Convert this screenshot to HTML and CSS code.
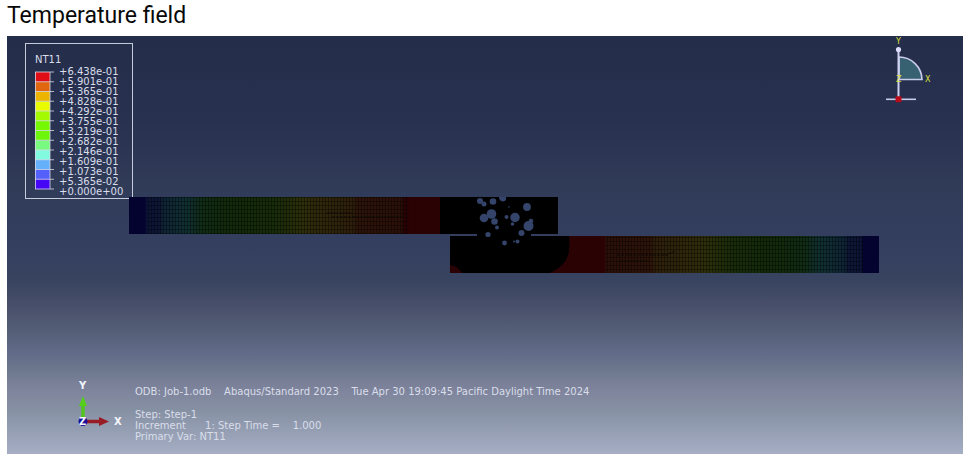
FILE: index.html
```html
<!DOCTYPE html>
<html lang="en">
<head>
<meta charset="utf-8">
<title>Temperature field</title>
<link rel="stylesheet" href="styles.css">
</head>
<body>
<main class="figure">
  <h1 class="title">Temperature field</h1>
  <section class="viewport">
    <div class="top">
      <div class="legend">
        <h2 class="legend-name">NT11</h2>
        <div class="legend-scale">
          <svg class="legend-bar" width="20" height="119" viewBox="0 0 20 119" aria-hidden="true">
            <g transform="translate(0 1)">
              <rect width="15" height="10" fill="#df0d16"/>
              <rect y="9.75" width="15" height="10" fill="#e0660f"/>
              <rect y="19.5" width="15" height="10" fill="#ecb400"/>
              <rect y="29.25" width="15" height="10" fill="#e8fb00"/>
              <rect y="39" width="15" height="10" fill="#a4fa00"/>
              <rect y="48.75" width="15" height="10" fill="#76f800"/>
              <rect y="58.5" width="15" height="10" fill="#6df60a"/>
              <rect y="68.25" width="15" height="10" fill="#78fa80"/>
              <rect y="78" width="15" height="10" fill="#80fbe0"/>
              <rect y="87.75" width="15" height="10" fill="#65b0fb"/>
              <rect y="97.5" width="15" height="10" fill="#5360fa"/>
              <rect y="107.25" width="15" height="10" fill="#4608f4"/>
              <path d="M0 0H19M0 9.75H19M0 19.5H19M0 29.25H19M0 39H19M0 48.75H19M0 58.5H19M0 68.25H19M0 78H19M0 87.75H19M0 97.5H19M0 107.25H19M0 117H19M.5 0V117M15 0V117" fill="none" stroke="#d5d9e8" stroke-width=".8"/>
            </g>
          </svg>
          <ol class="legend-values">
            <li>+6.438e-01</li><li>+5.901e-01</li><li>+5.365e-01</li><li>+4.828e-01</li><li>+4.292e-01</li><li>+3.755e-01</li><li>+3.219e-01</li><li>+2.682e-01</li><li>+2.146e-01</li><li>+1.609e-01</li><li>+1.073e-01</li><li>+5.365e-02</li><li>+0.000e+00</li>
          </ol>
        </div>
      </div>
      <svg class="compass" width="52" height="70" viewBox="0 0 52 70" role="img" aria-label="View compass">
        <path d="M17 24A23 23 0 0 1 40 46.500H17Z" fill="#376170" stroke="#c9cbea" stroke-width="1.600"/>
        <path d="M16.500 16V66" stroke="#d0d2f2" stroke-width="2"/>
        <path d="M4 66.300H34" stroke="#c9cbea" stroke-width="1.600"/>
        <circle cx="16.500" cy="16.500" r="2.600" fill="#dcdcfa"/>
        <rect x="13.500" y="63.300" width="6" height="6" rx="1" fill="#b90b19"/>
        <g class="compass-label"><text x="14" y="11">Y</text><text x="43" y="49">X</text><text x="14" y="49">Z</text></g>
      </svg>
    </div>
    <svg class="model" viewBox="0 0 956 80" role="img" aria-label="Temperature contours on two overlapping bars">
      <defs>
        <linearGradient id="bar-heat">
          <stop offset="0" stop-color="#04022f"/><stop offset=".05" stop-color="#04022f"/>
          <stop offset=".058" stop-color="#0c1438"/><stop offset=".1" stop-color="#0c1736"/>
          <stop offset=".11" stop-color="#0e2436"/><stop offset=".19" stop-color="#103032"/>
          <stop offset=".24" stop-color="#102c14"/><stop offset=".33" stop-color="#122a0a"/>
          <stop offset=".46" stop-color="#172c09"/><stop offset=".56" stop-color="#2e2f0a"/>
          <stop offset=".62" stop-color="#30270b"/><stop offset=".72" stop-color="#2e1e0a"/>
          <stop offset=".735" stop-color="#2d1308"/><stop offset=".875" stop-color="#2b0f08"/>
          <stop offset=".885" stop-color="#2b0204"/><stop offset="1" stop-color="#2b0204"/>
        </linearGradient>
        <pattern id="mesh" width="3" height="4" patternUnits="userSpaceOnUse">
          <path d="M0 .5H3M.5 0V4" stroke="#000" stroke-opacity=".36" stroke-width="1"/>
        </pattern>
      </defs>
      <g>
        <rect x="122" width="429" height="37"/>
        <rect x="122" width="311" height="37" fill="url(#bar-heat)"/>
        <rect x="139" width="263" height="37" fill="url(#mesh)"/>
        <path d="M320 16H346M325 20H395" stroke="#0c0904" stroke-dasharray="3 1" fill="none"/>
      </g>
      <g>
        <rect x="443" y="39" width="429" height="37"/>
        <rect x="561" y="39" width="311" height="37" fill="url(#bar-heat)" transform="rotate(180 716.500 57.500)"/>
        <rect x="599" y="39" width="257" height="37" fill="url(#mesh)"/>
        <path d="M610 58H660L668 54M613 64H642" stroke="#0c0904" stroke-dasharray="3 1" fill="none"/>
        <path d="M540 39H562V76H540Z"/>
        <path d="M543 76Q561 68 562 53V39H570V76ZM443 76V68Q451 69 455 76Z" fill="#2b0204"/>
        <path d="M560 39H562Q563 50 561 58Z"/>
      </g>
      <path d="M470 35H524V41H470Z"/>
      <g fill="#35446b">
        <circle cx="473" cy="4" r="3"/><circle cx="477" cy="7" r="2.500"/><circle cx="486" cy="4.500" r="3.300"/><path d="M492 0H499Q500 4 496 4.500Q492 4 492 0Z"/>
        <circle cx="484.500" cy="17" r="4.800"/><circle cx="477" cy="21" r="4.300"/><circle cx="487.500" cy="24.500" r="3.300"/><circle cx="490" cy="30.500" r="2"/>
        <circle cx="499.500" cy="20" r="2"/><circle cx="508" cy="20.500" r="4.700"/><circle cx="505.500" cy="27" r="1.800"/><circle cx="520" cy="10" r="3.900"/><circle cx="521.500" cy="29" r="5"/><circle cx="524" cy="24" r="2.300"/>
        <circle cx="514.500" cy="36" r="3"/><circle cx="481" cy="37.500" r="2.600"/><circle cx="497.500" cy="46" r="2.400"/><circle cx="510.500" cy="44.500" r="2"/><circle cx="507" cy="44.500" r="1"/><circle cx="502" cy="10" r=".8"/>
      </g>
    </svg>
    <footer class="status">
      <svg class="triad" width="60" height="54" viewBox="0 0 60 54" role="img" aria-label="Coordinate axes">
        <path d="M15 42V22" stroke="#52c51d" stroke-width="3.500"/><path d="M11 26L15 16L19 26Z" fill="#55cf1c"/>
        <path d="M15 41.500H33" stroke="#981c25" stroke-width="3.500"/><path d="M31 37L41 41.500L31 46Z" fill="#981c25"/>
        <circle cx="15" cy="41.500" r="4.500" fill="#19109c"/>
        <g class="triad-label"><text x="11" y="9">Y</text><text x="46" y="45">X</text><text x="11" y="45">Z</text></g>
      </svg>
      <div class="status-text">
        <p class="odb">ODB: Job-1.odb    Abaqus/Standard 2023    Tue Apr 30 19:09:45 Pacific Daylight Time 2024</p>
        <p>Step: Step-1</p>
        <p>Increment      1: Step Time =    1.000</p>
        <p>Primary Var: NT11</p>
      </div>
    </footer>
  </section>
</main>
</body>
</html>
```
FILE: styles.css
```css
* { box-sizing: border-box; }
body { margin: 0; background: #fff; }
h1, h2, p, ol { margin: 0; padding: 0; font-weight: 400; }
svg { display: block; }
.figure { padding: 0 7px; }
.title {
  height: 36px;
  font: 23px/32px Roboto, sans-serif;
  color: #080808;
}
.viewport {
  padding: 7px 0 12px;
  background: linear-gradient(#242d49 0%, #283150 20%, #303b58 35%, #343f60 50%, #37435f 58%, #464e69 64%, #545d76 70%, #626b88 76%, #6d788d 80%, #7d829b 84%, #858fa2 89%, #a5aec4 100%);
  color: #d9deea;
  font: 10px/11px "DejaVu Sans", sans-serif;
}
.top { display: flex; justify-content: space-between; padding: 0 29px 0 18px; }
.legend {
  width: 108px;
  height: 156px;
  padding: 10px 8px 0 9px;
  border: 1px solid #c6cbda;
}
.legend-name { font-size: 10px; line-height: 12px; }
.legend-scale { display: flex; gap: 4px; padding-top: 5px; }
.legend-values {
  display: flex;
  flex-direction: column;
  justify-content: space-between;
  height: 126px;
  margin-top: -4px;
  line-height: 10px;
  list-style: none;
}
.compass { margin-top: -10px; }
.compass-label { fill: #dfe03a; font-size: 8px; }
.model { width: 100%; margin-top: -2px; }
.status { display: flex; gap: 7px; padding: 103px 0 0 61px; }
.triad-label { fill: #f2f4fa; font-size: 10px; font-weight: 700; }
.status-text { padding-top: 6px; }
.status-text p { white-space: pre; }
.status-text .odb { margin-bottom: 12px; }
```
